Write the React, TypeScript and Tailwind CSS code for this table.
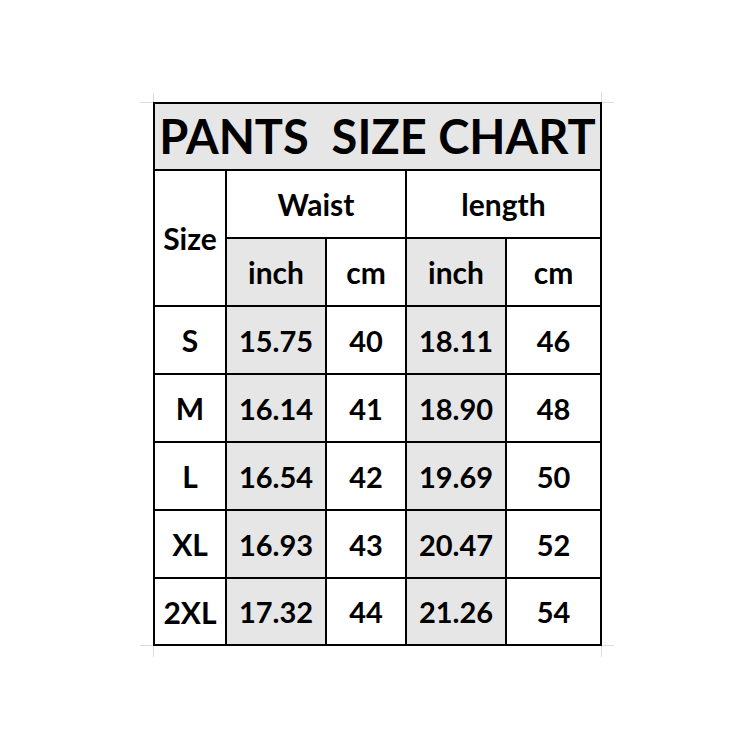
const rows = [
  ['S', '15.75', '40', '18.11', '46'],
  ['M', '16.14', '41', '18.90', '48'],
  ['L', '16.54', '42', '19.69', '50'],
  ['XL', '16.93', '43', '20.47', '52'],
  ['2XL', '17.32', '44', '21.26', '54'],
];

const gray = 'bg-[#e7e6e6]';

function Cell({ children, shade, className = '' }: { children: React.ReactNode; shade?: boolean; className?: string }) {
  return (
    <div className={`flex items-center justify-center ${shade ? gray : 'bg-white'} ${className}`}>
      {children}
    </div>
  );
}

export default function App() {
  return (
    <div className="w-[750px] h-[750px] bg-white pt-[102px] pl-[153px] text-black" style={{ fontFamily: 'Lato, "Open Sans", sans-serif' }}>
      <div className="relative w-[449px]">
        {/* faint sheet crop marks */}
        <div className="absolute left-[-13px] top-[0px] w-[13px] h-px bg-[#dcdcdc]" />
        <div className="absolute left-[0px] top-[-9px] w-px h-[9px] bg-[#dcdcdc]" />
        <div className="absolute right-[-12px] top-[0px] w-[12px] h-px bg-[#dcdcdc]" />
        <div className="absolute right-[0px] top-[-10px] w-px h-[10px] bg-[#dcdcdc]" />
        <div className="absolute left-[-13px] bottom-[0px] w-[13px] h-px bg-[#dcdcdc]" />
        <div className="absolute left-[0px] bottom-[-11px] w-px h-[11px] bg-[#dcdcdc]" />
        <div className="absolute right-[-12px] bottom-[0px] w-[12px] h-px bg-[#dcdcdc]" />
        <div className="absolute right-[0px] bottom-[-11px] w-px h-[11px] bg-[#dcdcdc]" />

        <div className="grid bg-black p-[2px] gap-[2px] grid-cols-[70px_98px_78px_98px_93px] grid-rows-[65px_66px_66px_66px_66px_66px_66px_65px] font-bold text-[30px] leading-none">
          <Cell shade className="col-span-5 text-[47px] whitespace-pre">PANTS  SIZE CHART</Cell>
          <Cell className="row-span-2">Size</Cell>
          <Cell className="col-span-2">Waist</Cell>
          <Cell className="col-span-2">length</Cell>
          <Cell shade>inch</Cell>
          <Cell>cm</Cell>
          <Cell shade>inch</Cell>
          <Cell>cm</Cell>
          {rows.map((r) =>
            r.map((v, i) => (
              <Cell key={r[0] + i} shade={i === 1 || i === 3} className={i === 0 ? '' : 'text-[29px]'}>
                {v}
              </Cell>
            ))
          )}
        </div>
      </div>
    </div>
  );
}
